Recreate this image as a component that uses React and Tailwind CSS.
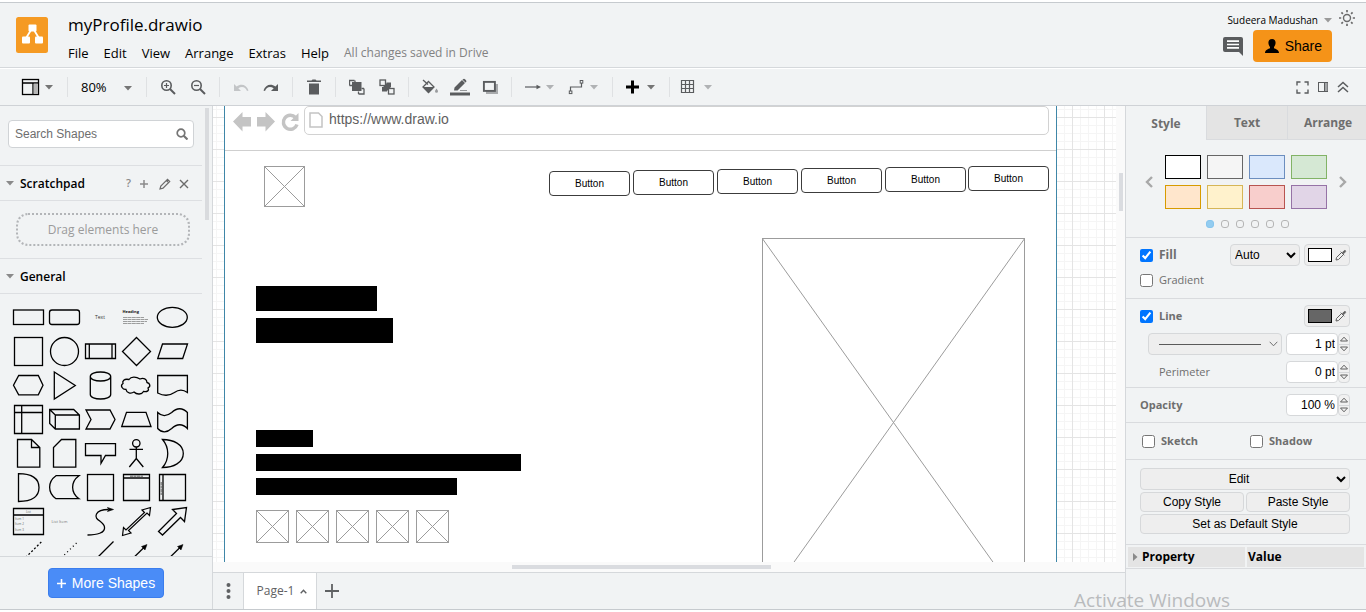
import React, { useState } from "react";

const Caret = ({ className = "text-[#757575]" }) => (
  <svg width="8" height="5" viewBox="0 0 8 5" className={className} aria-hidden="true">
    <path d="M0 0h8L4 4.600z" fill="currentColor" />
  </svg>
);

const Icon = ({ w = 20, h = 20, children }) => (
  <svg width={w} height={h} viewBox={`0 0 ${w} ${h}`} fill="none" stroke="currentColor" aria-hidden="true">
    {children}
  </svg>
);

const Separator = () => <span className="mx-1.5 h-5 w-px shrink-0 bg-[#dfe1e3]" />;

const Tool = ({ label, children, className = "text-[#5a5c5e]" }) => (
  <button aria-label={label} className={`flex h-8 w-[30px] shrink-0 items-center justify-center ${className}`}>
    {children}
  </button>
);

const DropTool = ({ label, children, caret = "text-[#b0b2b4]", className = "text-[#5a5c5e]" }) => (
  <button aria-label={label} className={`flex h-8 w-11 shrink-0 items-center gap-1 pl-1 ${className}`}>
    {children}
    <Caret className={caret} />
  </button>
);

function Header() {
  const menus = ["File", "Edit", "View", "Arrange", "Extras", "Help"];
  return (
    <header className="flex h-16 shrink-0 justify-between">
      <div className="flex pl-4">
        <svg width="32" height="36" viewBox="0 0 32 36" className="mt-3.5 shrink-0" aria-label="draw.io">
          <rect width="32" height="36" rx="2.500" fill="#f59a23" />
          <path d="M15 13L9.500 22M18 13l5.500 9" stroke="#fff" strokeWidth="1.800" />
          <rect x="12.500" y="7.500" width="8" height="7" rx="1" fill="#fff" />
          <rect x="6" y="19.500" width="8" height="7" rx="1" fill="#fff" />
          <rect x="19" y="19.500" width="8" height="7" rx="1" fill="#fff" />
        </svg>
        <div className="pl-5 pt-2.5">
          <h1 className="text-[17px] leading-6">myProfile.drawio</h1>
          <nav className="mt-1.5 flex items-center gap-[15px] text-[13px] leading-5">
            {menus.map((m) => (
              <button key={m}>{m}</button>
            ))}
            <span className="text-xs text-[#828282]">All changes saved in Drive</span>
          </nav>
        </div>
      </div>
      <div className="flex flex-col items-end pt-2">
        <div className="flex h-[18px] items-center gap-1.5 pr-2.5">
          <button className="flex items-center gap-1.5 text-[10px] leading-4">
            Sudeera Madushan
            <Caret className="text-[#9a9a9a]" />
          </button>
          <button aria-label="Appearance" className="-mt-1 text-[#6b6b6b]">
            <Icon w={18} h={18}>
              <circle cx="9" cy="9" r="3.500" strokeWidth="1.400" />
              <path
                d="M9 1v2.200M9 14.800V17M1 9h2.200M14.800 9H17M3.400 3.400l1.500 1.500M13.100 13.100l1.500 1.500M14.600 3.400l-1.500 1.500M4.900 13.100l-1.500 1.500"
                strokeWidth="1.700"
              />
            </Icon>
          </button>
        </div>
        <div className="mt-px flex items-center gap-2.5 pr-[34px]">
          <button aria-label="Comments" className="text-[#5a5c5e]">
            <Icon w={20} h={20}>
              <path d="M2 1h16q2 0 2 2v17l-4-4H2q-2 0-2-2V3q0-2 2-2z" fill="currentColor" stroke="none" />
              <path d="M4 5.200h12M4 8.500h12M4 11.800h12" stroke="#fff" strokeWidth="1.700" />
            </Icon>
          </button>
          <button className="flex h-8 items-center gap-1.5 rounded bg-[#f59318] pl-3 pr-2.5 font-['Liberation_Sans',sans-serif] text-sm">
            <Icon w={14} h={14}>
              <path
                d="M7 0c2.300 0 3.600 1.500 3.600 3.800S9.300 7.500 9 8v1.200c1.500.8 5 1.400 5 4.800H0c0-3.400 3.500-4 5-4.800V8c-.3-.5-1.600-1.900-1.600-4.200S4.700 0 7 0z"
                fill="currentColor"
                stroke="none"
              />
            </Icon>
            Share
          </button>
        </div>
      </div>
    </header>
  );
}

function Toolbar() {
  return (
    <div className="box-content flex h-9 shrink-0 items-center border-b border-[#cfd2d6] bg-[#f1f3f4] pl-[17px]">
      <DropTool label="View" caret="text-[#757575]" className="text-black">
        <Icon>
          <rect x="1.500" y="2.500" width="16" height="15" strokeWidth="1.300" />
          <path d="M1.500 6h16M12 6v11.500" strokeWidth="1.300" />
          <rect x="12.700" y="6.700" width="4.200" height="10.200" fill="#b5b5b5" stroke="none" />
        </Icon>
      </DropTool>
      <Separator />
      <button aria-label="Zoom" className="flex h-8 w-[66px] shrink-0 items-center justify-between pl-[7px] pr-2 pt-0.5 text-[13px]">
        80%
        <Caret />
      </button>
      <Separator />
      <Tool label="Zoom In">
        <Icon w={16} h={16}>
          <circle cx="6.500" cy="6.500" r="4.700" strokeWidth="1.600" />
          <path d="M10 10l5 5" strokeWidth="2" />
          <path d="M4 6.500h5M6.500 4v5" strokeWidth="1.200" />
        </Icon>
      </Tool>
      <Tool label="Zoom Out">
        <Icon w={16} h={16}>
          <circle cx="6.500" cy="6.500" r="4.700" strokeWidth="1.600" />
          <path d="M10 10l5 5" strokeWidth="2" />
          <path d="M4 6.500h5" strokeWidth="1.200" />
        </Icon>
      </Tool>
      <Separator />
      <Tool label="Undo" className="text-[#c3c5c7]">
        <Icon w={16} h={12}>
          <path d="M1 3v7h7L5.300 7.300C9 4.700 12.500 6 14 10l1.500-.5C13.500 3.500 8 2 3.600 5.600z" fill="currentColor" stroke="none" />
        </Icon>
      </Tool>
      <Tool label="Redo">
        <Icon w={16} h={12}>
          <path d="M15 3v7H8l2.700-2.700C7 4.700 3.500 6 2 10L.5 9.500C2.500 3.500 8 2 12.400 5.600z" fill="currentColor" stroke="none" />
        </Icon>
      </Tool>
      <Separator />
      <Tool label="Delete">
        <Icon w={14} h={16}>
          <path d="M0 1.500h4.500L5.500.5h3l1 1H14V3H0zM2 4.500h10V15.500H2z" fill="currentColor" stroke="none" />
        </Icon>
      </Tool>
      <Separator />
      <Tool label="To Front">
        <Icon w={16} h={16}>
          <path d="M5.500 1.500h-5v5M15 9.500v5.500H9.500M.5 6.500H3M6 1.500V4M12.500 9.500H15M9.500 12.500V15" strokeWidth="1.300" />
          <rect x="3" y="3" width="9.500" height="9" fill="currentColor" stroke="none" />
        </Icon>
      </Tool>
      <Tool label="To Back">
        <Icon w={16} h={16}>
          <path d="M7.500 3.500h4.500V8h-4.500zM3 8h5v4.500H3zM4.500 4.500h7v7h-7z" fill="currentColor" stroke="none" />
          <rect x="1" y="1" width="5.500" height="5.500" fill="#f1f3f4" strokeWidth="1.300" />
          <rect x="9.500" y="9.500" width="5.500" height="5.500" fill="#f1f3f4" strokeWidth="1.300" />
        </Icon>
      </Tool>
      <Separator />
      <Tool label="Fill Color">
        <Icon w={18} h={16}>
          <path d="M2 1l5 4.500" strokeWidth="1.300" />
          <path d="M7.500 2.500L13 8l-5.500 5.500L2 8z" strokeWidth="1.300" />
          <path d="M2 8h11l-5.500 6z" fill="currentColor" stroke="none" />
          <path d="M15.500 9.500c1 1.500 1.500 2 1.500 2.800a1.500 1.500 0 01-3 0c0-.8.5-1.300 1.500-2.800z" fill="#9a9c9e" stroke="none" />
        </Icon>
      </Tool>
      <Tool label="Line Color">
        <Icon w={20} h={18}>
          <path d="M4 12.500l.5-3L12 2l3 3-7.500 7.500zM13 1.200q1-.9 2 0l1 1q.9 1 0 2L15.500 4.600 12.500 1.700z" fill="currentColor" stroke="none" />
          <path d="M10 12.500h7" strokeWidth="1" opacity=".6" />
          <path d="M0 16h20" strokeWidth="3" />
        </Icon>
      </Tool>
      <Tool label="Shadow">
        <Icon w={16} h={14}>
          <path d="M4 4h12v10H4z" fill="#a8aaac" stroke="none" />
          <rect x="1.900" y="1.900" width="11" height="9" strokeWidth="1.900" fill="#f1f3f4" />
        </Icon>
      </Tool>
      <Separator />
      <DropTool label="Connection">
        <Icon>
          <path d="M3 10h13" strokeWidth="1.200" />
          <path d="M14.500 7.800l4.500 2.200-4.500 2.200z" fill="currentColor" stroke="none" />
        </Icon>
      </DropTool>
      <DropTool label="Waypoints">
        <Icon>
          <path d="M4.500 14v-4h11V6" strokeWidth="1.200" />
          <rect x="3.300" y="14" width="2.600" height="2.600" />
          <rect x="14.200" y="3.500" width="2.600" height="2.600" />
        </Icon>
      </DropTool>
      <Separator />
      <DropTool label="Insert" caret="text-[#757575]" className="text-black">
        <Icon>
          <path d="M9.500 3.500v13M3 10h13" strokeWidth="3" />
        </Icon>
      </DropTool>
      <Separator />
      <DropTool label="Table">
        <Icon>
          <path d="M1.500 3.500h12v12h-12zM5.500 3.500v12M9.500 3.500v12M1.500 7.500h12M1.500 11.500h12" strokeWidth="1.200" />
        </Icon>
      </DropTool>
      <div className="ml-auto flex items-center gap-2 pr-[17px] text-[#5a5c5e]">
        <button aria-label="Fullscreen">
          <Icon w={13} h={13}>
            <path d="M1 4.500V1h3.500M8.500 1H12v3.500M12 8.500V12H8.500M4.500 12H1V8.500" strokeWidth="1.400" />
          </Icon>
        </button>
        <button aria-label="Format">
          <Icon w={12} h={12}>
            <rect x="1.500" y="1.500" width="9" height="9" />
            <path d="M7.500 2h3v8h-3z" fill="#a3a5a7" stroke="none" />
            <path d="M7.500 1.500v9" />
          </Icon>
        </button>
        <button aria-label="Collapse">
          <Icon w={12} h={12}>
            <path d="M1 6l5-4.500L11 6M1 11l5-4.500 5 4.500" strokeWidth="1.500" />
          </Icon>
        </button>
      </div>
    </div>
  );
}

const SHAPES = [
  ["Rectangle", <rect x="3.5" y="10" width="30" height="14.5" />],
  ["Rounded Rectangle", <rect x="3.5" y="10" width="30" height="14.5" rx="2.5" />],
  ["Text", <text x="13" y="19" fontSize="5" fill="#333" stroke="none">Text</text>],
  [
    "Textbox",
    <g stroke="none" fill="#111">
      <text x="4.5" y="13" fontSize="4" fontWeight="700">Heading</text>
      <path d="M5 17.500h21M5 19.500h25M5 21.500h24M5 23.500h21" stroke="#777" strokeWidth=".7" strokeDasharray="4 .4" />
    </g>,
  ],
  ["Ellipse", <ellipse cx="18.3" cy="17.300" rx="15" ry="10" />],
  ["Square", <rect x="4.500" y="3.500" width="28" height="28" />],
  ["Circle", <circle cx="18.500" cy="17.500" r="14" />],
  ["Process", <path d="M3.500 10h30v14.500h-30zM7.300 10v14.500M30 10v14.500" />],
  ["Diamond", <path d="M18.500 3.500l14 14-14 14-14-14z" />],
  ["Parallelogram", <path d="M8.500 10h25l-4.800 14.500h-25z" />],
  ["Hexagon", <path d="M8.700 7.500h19.600L33 17.300l-4.700 9.500H8.700L3.500 17.300z" />],
  ["Triangle", <path d="M8.300 4l21 13.500-21 13.500z" />],
  ["Cylinder", <path d="M8.300 8.500c0-6 20.400-6 20.400 0v18c0 6-20.400 6-20.400 0zM8.300 8.500c0 6 20.400 6 20.400 0" />],
  ["Cloud", <path d="M11 11.500c-5-1-7 1.500-6 4-3 2-1 6 3 6 .5 3.500 5 4.500 8 2.500 3 3 8 2.500 9.500-.5 4 .5 6-1 4.500-3.500 3-1.500 2-5-1-5.500 0-3.500-3.500-5-7-3.500-4-2.500-9-2.500-11 .5z" />],
  ["Document", <path d="M3.700 7.500h29.700v17c-4-3-9-3-13 0-5 3.500-11 3.500-16.700.5z" />],
  ["Internal Storage", <path d="M4.500 3.500h28v28h-28zM11.700 3.500v28M4.500 10.500h28" />],
  ["Cube", <path d="M3.700 7.500h24l5.700 5.500v14H9.300l-5.600-5.500zM3.700 7.500L9.300 13v14M9.300 13h24" />],
  ["Step", <path d="M4 8h24l5 9.500-5 9.500H4l5-9.500z" />],
  ["Trapezoid", <path d="M8.500 10.300h19.500l5 14.200H3.700z" />],
  ["Tape", <path d="M3.700 10.500c4 4 9 4 14 0 5-5 11-5 15.700 0v16c-4.700-5-10.700-5-15.700 0-5 4.500-10 4.500-14 0z" />],
  ["Note", <path d="M7.500 3.500h14l8.300 8v19.700H7.500zM21.500 3.500v8h8.300" />],
  ["Card", <path d="M15.500 3.500h14.300v27.700H7.500V11.500z" />],
  ["Callout", <path d="M3.500 7.700h30v11.800H23.500l-4.500 7.800v-7.800H3.500z" />],
  ["Actor", <g><circle cx="18.300" cy="7.300" r="3.700" /><path d="M18.300 11v11.500M11.500 13.300h13.500M18.300 22.500l-7 8.500M18.300 22.500l7 8.500" /></g>],
  ["Or", <path d="M8.500 3.500c11 0 20.800 5 20.800 14s-9.800 14-20.800 14c7-8 7-20 0-28z" />],
  ["And", <path d="M8.500 3.700c12 0 20.500 4 20.500 13.900s-8.500 13.900-20.500 13.900z" />],
  ["Data Storage", <path d="M10 5.700h23c-8.500 6-8.500 17 0 23H10c-8.500-6-8.500-17 0-23z" />],
  ["Container", <rect x="5.500" y="4.500" width="26" height="26" />],
  ["Vertical Container", <g><path d="M5.500 4.500h26v26h-26zM5.500 8h26" /><path d="M12 6.200h13" strokeDasharray="3 .5" strokeWidth=".6" /></g>],
  ["Horizontal Container", <g><path d="M5.500 4.500h26v26h-26zM9 4.500v26" /><path d="M7.200 12v13" strokeDasharray="3 .5" strokeWidth=".6" /></g>],
  [
    "List",
    <g>
      <path d="M3.500 4.500h30v26h-30zM3.500 11h30" />
      <g fill="#666" stroke="none" fontSize="3">
        <text x="16" y="9">List</text>
        <text x="5" y="15.500">Item 1</text>
        <text x="5" y="21">Item 2</text>
        <text x="5" y="27">Item 3</text>
      </g>
    </g>,
  ],
  ["List Item", <text x="5.500" y="18.500" fontSize="4" fill="#777" stroke="none">List Item</text>],
  ["Curve", <g><path d="M5.500 31c9 0 18-2 17-8s-11-7-8-13c2-4 7-4.500 12-4.500" /><path d="M31.500 5.500l-6-2 1.200 2-1.200 2z" fill="#000" strokeWidth=".6" /></g>],
  ["Bidirectional Arrow", <path d="M4.500 31.500l1-8 2.500 2.500L26.500 8.500l-2.500-2.500L32.500 3.500l-1 8-2.500-2.500L10.500 26.500l2.500 2.500z" strokeWidth="1.200" />],
  ["Arrow", <path d="M4.500 27.500L22.500 9.500 18.500 5.500 32.500 3.500l-2 14-4-4L8.500 31z" />],
  ["Dashed Line", <path d="M31.300 4L4 31" strokeDasharray="2 2" />],
  ["Dotted Line", <path d="M30.500 5L4 31" strokeDasharray="1 3" />],
  ["Line", <path d="M31.500 3.500L4 31" />],
  ["Directional Connector", <g><path d="M27 8.500L4 31" /><path d="M29 6.500l-5.500 2 3.500 3.500z" fill="#000" strokeWidth=".5" /></g>],
  ["Link", <g><path d="M27 8.500L4 31" /><path d="M29 6.500l-5.500 2 3.500 3.500z" fill="#000" strokeWidth=".5" /></g>],
];

const SectionTitle = ({ children }) => (
  <button className="flex items-center gap-1.5 text-xs font-semibold leading-5">
    <Caret className="text-[#8a8a8a]" />
    {children}
  </button>
);

function Sidebar() {
  return (
    <aside className="flex w-[213px] shrink-0 flex-col border-r border-[#d5d8db]">
      <div className="relative min-h-0 flex-1 overflow-hidden">
        <span className="absolute right-[3px] top-0.5 h-28 w-1 bg-[#d9dbde]" />
        <div className="mr-2.5">
          <div className="border-b border-[#dddfe2] px-2 pb-[17px] pt-3.5">
            <div className="flex h-7 items-center rounded border border-[#d0d3d6] bg-white pl-1.5 pr-[5px]">
              <input
                aria-label="Search Shapes"
                placeholder="Search Shapes"
                className="min-w-0 flex-1 bg-transparent font-['Liberation_Sans',sans-serif] text-xs outline-none placeholder:text-[#6e6e6e]"
              />
              <span className="text-[#757575]">
                <Icon w={12} h={12}>
                  <circle cx="5" cy="5" r="3.800" strokeWidth="1.700" />
                  <path d="M7.700 7.700l3.800 3.800" strokeWidth="2.200" />
                </Icon>
              </span>
            </div>
          </div>
          <div className="flex h-[35px] items-center justify-between border-b border-[#dddfe2] pl-1.5 pr-[13px] pt-px">
            <SectionTitle>Scratchpad</SectionTitle>
            <div className="flex items-center gap-2 text-[#6b6b6b]">
              <button className="text-[11px] font-semibold text-[#8a8a8a]" aria-label="Help">?</button>
              <button aria-label="Add" className="text-[#8a8a8a]">
                <Icon w={10} h={10}><path d="M5 1v8M1 5h8" strokeWidth="1.500" /></Icon>
              </button>
              <button aria-label="Edit" className="ml-0.5">
                <Icon w={12} h={12}><path d="M1 11l.8-3L8.500 1.300l2.200 2.200L4 10.200zM7.300 2.500l2.200 2.200" strokeWidth="1.200" /></Icon>
              </button>
              <button aria-label="Close">
                <Icon w={10} h={10}><path d="M1 1l8 8M9 1L1 9" strokeWidth="1.400" /></Icon>
              </button>
            </div>
          </div>
          <div className="border-b border-[#dddfe2] pb-3 pl-4 pr-3 pt-3">
            <div className="flex h-[33px] items-center justify-center rounded-xl border-2 border-dotted border-[#b3b5b8] text-xs text-[#9b9b9b]">
              Drag elements here
            </div>
          </div>
          <div className="flex h-[35px] items-center border-b border-[#dddfe2] pl-1.5 pt-px">
            <SectionTitle>General</SectionTitle>
          </div>
          <div className="grid grid-cols-[repeat(5,36px)] pl-2.5 pt-1.5">
            {SHAPES.map(([name, art]) => (
              <button key={name} aria-label={name} title={name} className="h-[34px]">
                <svg width="36" height="34" viewBox="0 0 36 34" fill="none" stroke="#000" strokeWidth="1.3" className="block">
                  {art}
                </svg>
              </button>
            ))}
          </div>
        </div>
      </div>
      <div className="flex h-[53px] shrink-0 items-center justify-center border-t border-[#d5d8db]">
        <button className="flex h-[30px] items-center gap-1.5 rounded-sm border border-[#3b7ded] bg-[#4a8cf7] px-2 font-['Liberation_Sans',sans-serif] text-sm text-white">
          <Icon w={9} h={9}><path d="M4.500 0v9M0 4.500h9" strokeWidth="1.600" /></Icon>
          More Shapes
        </button>
      </div>
    </aside>
  );
}

const CrossBox = ({ className }) => (
  <svg className={`absolute text-[#9c9c9c] ${className}`} viewBox="0 0 100 100" preserveAspectRatio="none" fill="none" stroke="currentColor">
    <path d="M0 0L100 100M100 0L0 100" vectorEffect="non-scaling-stroke" />
    <rect width="100" height="100" strokeWidth="2" vectorEffect="non-scaling-stroke" />
  </svg>
);

const NAV_BUTTONS = [
  "left-[324px] top-[65px]",
  "left-[408px] top-[64px]",
  "left-[492px] top-[63px]",
  "left-[576px] top-[62px]",
  "left-[660px] top-[61px]",
  "left-[743px] top-[60px]",
];

const BARS = [
  "left-[31px] top-[180px] h-[25px] w-[121px]",
  "left-[31px] top-[212px] h-[25px] w-[137px]",
  "left-[31px] top-[324px] h-[17px] w-[57px]",
  "left-[31px] top-[348px] h-[17px] w-[265px]",
  "left-[31px] top-[372px] h-[17px] w-[201px]",
];

const THUMBS = ["left-[31px]", "left-[71px]", "left-[111px]", "left-[151px]", "left-[191px]"];

function Canvas() {
  return (
    <main className="flex min-w-0 flex-1 flex-col">
      <div className="flex min-h-0 flex-1">
        <div className="relative min-w-0 flex-1 overflow-hidden bg-white">
          <svg className="absolute h-full w-full" aria-hidden="true">
            <defs>
              <pattern id="grid" width="32" height="32" x="27" y="11" patternUnits="userSpaceOnUse">
                <path d="M8.500 0v32M16.500 0v32M24.500 0v32M0 8.500h32M0 16.500h32M0 24.500h32" stroke="#f5f5f5" />
                <path d="M.5 0v32M0 .5h32" stroke="#e4e4e4" />
              </pattern>
            </defs>
            <rect width="100%" height="100%" fill="url(#grid)" />
          </svg>
          <div className="absolute left-[11px] top-0 h-full w-[833px] overflow-hidden border-x border-[#3f87a8] bg-white font-['Liberation_Sans',sans-serif]">
            <svg className="absolute left-2 top-1.5 text-[#c4c4c4]" width="68" height="20" viewBox="0 0 68 20" fill="currentColor">
              <path d="M0 9.500L9.500 0v5H18v9.500H9.500v5zM42 9.500L32.500 0v5H24v9.500h8.500v5z" />
              <path d="M62.500 5.500A7 7 0 1 0 64 12.500" fill="none" stroke="currentColor" strokeWidth="3.500" />
              <path d="M65.500 1v8H57.500z" />
            </svg>
            <div className="absolute left-[79px] top-0 flex h-[29px] w-[745px] items-center rounded-[5px] border border-[#d2d2d2] pb-0.5 pl-1">
              <svg width="14" height="16" viewBox="0 0 14 16" fill="none" stroke="#c4c4c4" strokeWidth="1.500" aria-hidden="true">
                <path d="M1 1h8.500L13 4.500V15H1z" />
              </svg>
              <span className="pb-px pl-1.5 text-sm leading-5 text-[#5f5f5f]">https://www.draw.io</span>
            </div>
            <div className="absolute left-0 top-11 h-px w-full bg-[#cfcfcf]" />
            <CrossBox className="left-[39px] top-[60px] h-[41px] w-[41px]" />
            {NAV_BUTTONS.map((pos) => (
              <div key={pos} className={`absolute flex h-[25px] w-[81px] items-center justify-center rounded border border-[#3c3c3c] text-[10px] leading-3 ${pos}`}>
                Button
              </div>
            ))}
            {BARS.map((b) => (
              <div key={b} className={`absolute bg-black ${b}`} />
            ))}
            {THUMBS.map((t) => (
              <CrossBox key={t} className={`top-[404px] h-[33px] w-[33px] ${t}`} />
            ))}
            <CrossBox className="left-[537px] top-[132px] h-[369px] w-[263px]" />
          </div>
        </div>
        <div className="w-[9px] shrink-0 bg-[#fafafa] pl-[3px] pt-[67px]">
          <div className="h-[38px] w-1 bg-[#dadce0]" />
        </div>
      </div>
      <div className="flex h-2.5 shrink-0 items-center justify-center bg-[#fafafa] pr-14">
        <div className="h-1 w-[259px] bg-[#dadce0]" />
      </div>
      <div className="flex h-[37px] shrink-0 items-stretch border-t border-[#d5d8db] text-[#5f6163]">
        <button aria-label="Pages" className="flex w-[30px] items-center justify-center">
          <Icon w={5} h={18}>
            <g fill="currentColor" stroke="none">
              <circle cx="2.500" cy="3" r="2" />
              <circle cx="2.500" cy="9" r="2" />
              <circle cx="2.500" cy="15" r="2" />
            </g>
          </Icon>
        </button>
        <button className="flex w-[74px] items-center justify-center gap-1.5 border-x border-[#d5d8db] bg-white pl-1 text-xs">
          Page-1
          <Icon w={7} h={5}><path d="M.7 4.300l2.800-3 2.800 3" strokeWidth="1.400" /></Icon>
        </button>
        <button aria-label="Insert Page" className="flex w-[30px] items-center justify-center">
          <Icon w={14} h={14}><path d="M7 0v14M0 7h14" strokeWidth="1.800" /></Icon>
        </button>
      </div>
    </main>
  );
}

const Dropper = () => (
  <Icon w={12} h={12}>
    <path d="M1 11l.5-2.500 5-5 2 2-5 5zM5.700 2.700l3.600 3.600" strokeWidth="1" />
    <path d="M7.300 3.500l1.700-1.700q1-.8 1.500-.2.600.700-.2 1.500L8.600 4.800z" fill="currentColor" strokeWidth=".6" />
  </Icon>
);

const ColorButton = ({ label, color }) => (
  <button aria-label={label} className="flex h-[22px] w-[46px] shrink-0 items-center gap-[3px] rounded border border-[#d6d8da] bg-[#eeeeee] pl-[3px] text-[#5f5f5f]">
    <span className={`h-3.5 w-6 border border-black ${color}`} />
    <Dropper />
  </button>
);

function Stepper({ label, initial }) {
  const [value, setValue] = useState(initial);
  const step = (d) => setValue((v) => v.replace(/\d+/, (n) => String(Math.max(0, Number(n) + d))));
  return (
    <div className="flex h-[22px] shrink-0 items-center">
      <input
        aria-label={label}
        value={value}
        onChange={(e) => setValue(e.target.value)}
        className="h-[22px] w-[52px] rounded border border-[#d6d8da] bg-white pr-0.5 text-right font-['Liberation_Sans',sans-serif] text-xs text-black outline-none"
      />
      <div className="flex h-[22px] w-3 flex-col rounded border border-[#d6d8da] bg-[#f1f1f1] text-[#5f5f5f]">
        <button aria-label={`Increase ${label}`} onClick={() => step(1)} className="flex flex-1 items-center justify-center border-b border-[#d6d8da]">
          <Icon w={10} h={6}><path d="M1.500 5h7L5 1.200z" fill="#f1f1f1" /></Icon>
        </button>
        <button aria-label={`Decrease ${label}`} onClick={() => step(-1)} className="flex flex-1 items-center justify-center">
          <Icon w={10} h={6}><path d="M1.500 1h7L5 4.800z" fill="#f1f1f1" /></Icon>
        </button>
      </div>
    </div>
  );
}

const Check = ({ children, checked = false, className = "" }) => (
  <label className={`flex items-center gap-1.5 ${className}`}>
    <input type="checkbox" defaultChecked={checked} className="h-[13px] w-[13px]" />
    {children}
  </label>
);

const SWATCHES = [
  "border-black bg-white",
  "border-[#666666] bg-[#f5f5f5]",
  "border-[#6c8ebf] bg-[#dae8fc]",
  "border-[#82b366] bg-[#d5e8d4]",
  "border-[#d79b00] bg-[#ffe6cc]",
  "border-[#d6b656] bg-[#fff2cc]",
  "border-[#b85450] bg-[#f8cecc]",
  "border-[#9673a6] bg-[#e1d5e7]",
];

const WIDE_BUTTON = "h-5 rounded border border-[#d6d8da] bg-[#eeeeee] font-['Liberation_Sans',sans-serif] text-xs text-black";

function FormatPanel() {
  const section = "border-b border-[#d9dbde] pl-3.5 pr-4";
  return (
    <aside className="flex w-[241px] shrink-0 flex-col border-l border-[#d5d8db] text-[11px] text-[#6e6e6e]">
      <div role="tablist" className="flex h-[34px] shrink-0 overflow-hidden text-xs font-bold">
        <button role="tab" aria-selected="true" className="w-20 shrink-0 pt-0.5">Style</button>
        <button role="tab" className="w-[81px] shrink-0 border-b border-l border-[#d9dbde] bg-[#e4e4e4]">Text</button>
        <button role="tab" className="w-[81px] shrink-0 border-b border-l border-[#d9dbde] bg-[#e4e4e4]">Arrange</button>
      </div>

      <div className="border-b border-[#d9dbde] pb-[9px] pt-[15px]">
        <div className="flex items-center justify-center gap-3">
          <button aria-label="Previous styles" className="text-[#a8a8a8]">
            <Icon w={8} h={12}><path d="M7 1L2 6l5 5" strokeWidth="2.400" /></Icon>
          </button>
          <div className="grid grid-cols-4 gap-1.5">
            {SWATCHES.map((s) => (
              <button key={s} aria-label="Style preset" className={`h-6 w-9 border ${s}`} />
            ))}
          </div>
          <button aria-label="Next styles" className="text-[#a8a8a8]">
            <Icon w={8} h={12}><path d="M1 1l5 5-5 5" strokeWidth="2.400" /></Icon>
          </button>
        </div>
        <div className="mt-[11px] flex justify-center gap-[7px] pl-0.5">
          {[0, 1, 2, 3, 4, 5].map((i) => (
            <button
              key={i}
              aria-label={`Styles page ${i + 1}`}
              className={`h-2 w-2 rounded-[3px] border ${i === 0 ? "border-[#86c5ee] bg-[#93ccf0]" : "border-[#b5b5b5]"}`}
            />
          ))}
        </div>
      </div>

      <div className={`${section} pb-2.5 pt-1.5`}>
        <div className="flex h-[22px] items-center">
          <Check checked className="mr-auto text-xs font-bold">Fill</Check>
          <select aria-label="Fill style" className="mr-1 h-[22px] w-[70px] rounded border border-[#d6d8da] bg-[#eeeeee] font-['Liberation_Sans',sans-serif] text-xs text-black">
            <option>Auto</option>
          </select>
          <ColorButton label="Fill color" color="bg-white" />
        </div>
        <Check className="mt-1.5 h-4">Gradient</Check>
      </div>

      <div className={`${section} pb-1 pt-1.5`}>
        <div className="flex h-[22px] items-center justify-between">
          <Check checked className="font-bold">Line</Check>
          <ColorButton label="Line color" color="bg-[#666666]" />
        </div>
        <div className="mt-1.5 flex items-center gap-1 pl-2">
          <button aria-label="Line style" className="flex h-[22px] min-w-0 flex-1 items-center gap-2 rounded border border-[#d6d8da] bg-[#eeeeee] pl-2.5 pr-[3px]">
            <span className="h-px flex-1 bg-[#5a5a5a]" />
            <Icon w={9} h={6}><path d="M.7.8l3.800 4 3.800-4" /></Icon>
          </button>
          <Stepper label="Line width" initial="1 pt" />
        </div>
        <div className="mt-1.5 flex items-center justify-between pl-[19px]">
          <span>Perimeter</span>
          <Stepper label="Perimeter" initial="0 pt" />
        </div>
      </div>

      <div className={`${section} flex h-[35px] items-center justify-between`}>
        <span className="font-bold">Opacity</span>
        <Stepper label="Opacity" initial="100 %" />
      </div>

      <div className={`${section} flex h-[37px] items-center font-bold`}>
        <Check className="w-[108px] pl-0.5">Sketch</Check>
        <Check className="pl-0.5">Shadow</Check>
      </div>

      <div className={`${section} flex flex-col gap-0.5 pb-2.5 pt-2`}>
        <select aria-label="Edit" className={`${WIDE_BUTTON} h-[22px] text-center`}>
          <option>Edit</option>
        </select>
        <div className="grid grid-cols-2 gap-0.5">
          <button className={WIDE_BUTTON}>Copy Style</button>
          <button className={WIDE_BUTTON}>Paste Style</button>
        </div>
        <button className={WIDE_BUTTON}>Set as Default Style</button>
      </div>

      <div className="border-b border-[#d9dbde] px-0.5 pb-px pt-0.5">
        <table className="w-full table-fixed border-collapse text-xs font-bold text-black">
          <thead>
            <tr className="h-5 text-left">
              <th className="border-r-2 border-[#f1f3f4] bg-[#e4e4e4] pl-1 leading-5">
                <span className="flex items-center gap-1">
                  <Icon w={6} h={8}><path d="M1 0l4.500 4L1 8z" fill="#8a8a8a" stroke="none" /></Icon>
                  Property
                </span>
              </th>
              <th className="bg-[#e4e4e4] pl-px leading-5">Value</th>
            </tr>
          </thead>
        </table>
      </div>
    </aside>
  );
}

export default function App() {
  return (
    <div className="relative flex h-screen flex-col bg-white pb-0.5 pt-0.5 font-['Open_Sans',sans-serif] text-black">
      <div className="flex min-h-0 flex-1 flex-col border-y border-[#c6cace] bg-[#f1f3f4]">
        <Header />
        <div className="h-0.5 shrink-0 border-b border-white bg-[#d5d8db]" />
        <Toolbar />
        <div className="flex min-h-0 flex-1">
          <Sidebar />
          <Canvas />
          <FormatPanel />
        </div>
      </div>
      <div className="pointer-events-none absolute bottom-0 right-[136px] text-[19px] leading-6 text-[#b9bbbd]">Activate Windows</div>
    </div>
  );
}
